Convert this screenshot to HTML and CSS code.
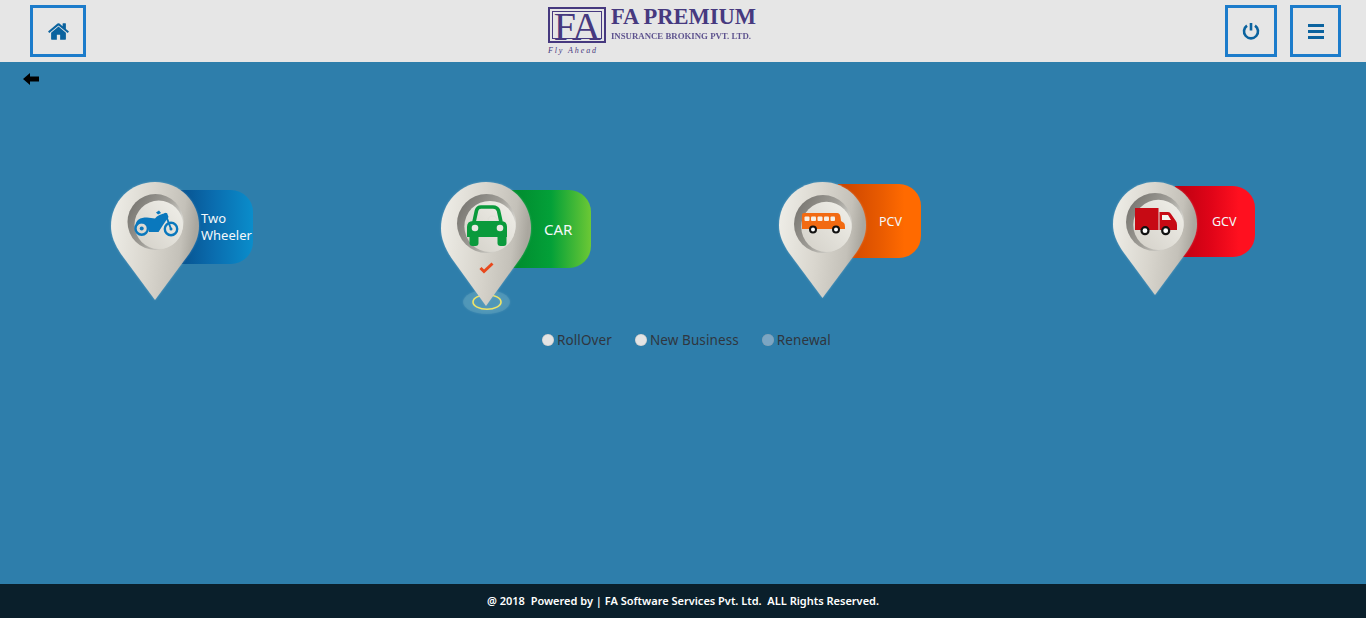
FILE: index.html
```html
<!DOCTYPE html>
<html lang="en">
<head>
<meta charset="utf-8">
<title>FA Premium</title>
<link rel="stylesheet" href="styles.css">
</head>
<body>
<svg class="defs" aria-hidden="true">
  <defs>
    <linearGradient id="pinFill" x1="0" y1="0" x2="1" y2="0.15">
      <stop offset="0" stop-color="#f0efe9"/>
      <stop offset="0.5" stop-color="#d9d6ce"/>
      <stop offset="0.85" stop-color="#c4c1b9"/>
      <stop offset="1" stop-color="#aaa79f"/>
    </linearGradient>
    <linearGradient id="wellDark" x1="0" y1="0" x2="1" y2="0.6">
      <stop offset="0" stop-color="#6f6d68"/>
      <stop offset="0.6" stop-color="#a09e98"/>
      <stop offset="1" stop-color="#e4e3dd"/>
    </linearGradient>
    <linearGradient id="wellLight" x1="0" y1="1" x2="1" y2="0">
      <stop offset="0" stop-color="#d3d0c8"/>
      <stop offset="1" stop-color="#f1f0ea"/>
    </linearGradient>
    <symbol id="pin" viewBox="0 0 88 118" preserveAspectRatio="none">
      <path fill="url(#pinFill)" d="M44 0C68.5 0 88 19.5 88 44C88 54 84 63 78 72L44 118L10 72C4 63 0 54 0 44C0 19.5 19.500 0 44 0Z"/>
    </symbol>
    <symbol id="well" viewBox="0 0 60 60">
      <circle cx="30" cy="30" r="30" fill="url(#wellDark)"/>
      <circle cx="33.500" cy="33" r="26" fill="url(#wellLight)"/>
    </symbol>
  </defs>
</svg>

<header class="topbar">
  <a class="tool tool-home" href="#" aria-label="Home">
    <svg class="icon-home" viewBox="0 0 1792 1792"><path d="M1472 992v480q0 26-19 45t-45 19h-384v-384h-256v384h-384q-26 0-45-19t-19-45v-480q0-1 .5-3t.5-3l575-474 575 474q1 2 1 6zm223-69l-62 74q-8 9-21 11h-3q-13 0-21-7l-692-577-692 577q-12 8-24 7-13-2-21-11l-62-74q-8-10-7-23.5t11-21.5l719-599q32-26 76-26t76 26l244 204v-195q0-14 9-23t23-9h192q14 0 23 9t9 23v408l219 182q10 8 11 21.5t-7 23.5z"/></svg>
  </a>
  <div class="logo">
    <div class="logo-mark">
      <div class="logo-box">FA</div>
      <div class="logo-tag">Fly Ahead</div>
    </div>
    <div class="logo-words">
      <div class="logo-name">FA PREMIUM</div>
      <div class="logo-sub">INSURANCE BROKING PVT. LTD.</div>
    </div>
  </div>
  <div class="tools-right">
    <a class="tool tool-power" href="#" aria-label="Log out">
      <svg class="icon-power" viewBox="0 0 18 18"><path d="M5 3.600A7 7 0 1 0 13 3.600"/><path d="M9 1V8.500"/></svg>
    </a>
    <a class="tool tool-menu" href="#" aria-label="Menu">
      <span class="bars"><i></i><i></i><i></i></span>
    </a>
  </div>
</header>

<main class="content">
  <a class="back" href="#" aria-label="Back">
    <svg class="icon-back" viewBox="0 0 16 12"><path d="M0 6L7 0V3.500H16V8.500H7V12Z"/></svg>
  </a>

  <section class="vehicles">
    <div class="vehicle v-bike">
      <div class="badge badge-bike">Two<br>Wheeler</div>
      <svg class="pin-art" viewBox="0 0 88 118">
        <use href="#pin" width="88" height="118"/>
        <use href="#well" x="15" y="12" width="59" height="56"/>
        <g fill="#0a78bd">
          <path d="M24.500 44C24.500 38 29 35.500 36 35.500L44 36.500C46 33.500 50 32 56 31L57.500 35L52 43L47.500 50H38C38 44 34 40.500 29 41.500C27 42 25 43 24.500 44Z"/>
          <path d="M45 30.500L48 28.500L50 31L47 32.500Z"/>
          <path d="M54 31L60 47" stroke="#0a78bd" stroke-width="2" fill="none"/>
          <circle cx="30.700" cy="46.500" r="6.200" fill="none" stroke="#0a78bd" stroke-width="2.400"/>
          <circle cx="60" cy="47" r="6.200" fill="none" stroke="#0a78bd" stroke-width="2.400"/>
          <circle cx="30.700" cy="46.500" r="2"/>
          <circle cx="60" cy="47" r="1.500"/>
        </g>
      </svg>
    </div>

    <div class="vehicle v-car">
      <div class="badge badge-car">CAR</div>
      <svg class="pin-art pin-art-car" viewBox="0 0 92 134">
        <ellipse cx="45.500" cy="120" rx="23.500" ry="12" fill="#5fa3bd" opacity=".45"/>
        <ellipse cx="46" cy="120" rx="14" ry="7.200" fill="none" stroke="#f0e566" stroke-width="1.600"/>
        <use href="#pin" width="90" height="124"/>
        <use href="#well" x="14.500" y="12" width="62" height="59"/>
        <g fill="#0a9a3c">
          <path d="M33 40L35.500 28.500Q36.500 25 40 25H52Q56 25 57.500 28.500L60 40" fill="none" stroke="#0a9a3c" stroke-width="3.600"/>
          <path d="M26 45Q26 39 32 39H60Q66 39 66 45V55H26Z"/>
          <rect x="28.500" y="50" width="9" height="14" rx="3"/>
          <rect x="56.500" y="50" width="9" height="14" rx="3"/>
        </g>
        <circle cx="34" cy="46" r="3.300" fill="#e9e8e2"/>
        <circle cx="59" cy="46" r="3.300" fill="#e9e8e2"/>
        <path d="M47 39Q47 34 51.500 34Q56 34 56 39" fill="none" stroke="#e0dfd8" stroke-width="1"/>
        <path d="M39.500 86L43 89.500L51.500 81.500" fill="none" stroke="#e8481c" stroke-width="3"/>
      </svg>
    </div>

    <div class="vehicle v-bus">
      <div class="badge badge-bus">PCV</div>
      <svg class="pin-art" viewBox="0 0 87 116">
        <use href="#pin" width="87" height="116"/>
        <use href="#well" x="14" y="13" width="60" height="58"/>
        <path fill="#f26a12" d="M25 31H58Q61 31 61.500 35L62 39L65 41Q66 42 66 45V47H23V33Q23 31 25 31Z"/>
        <g fill="#f6efe6">
          <rect x="25.500" y="34.500" width="5" height="4.500" rx="1"/>
          <rect x="32" y="34.500" width="5" height="4.500" rx="1"/>
          <rect x="38.500" y="34.500" width="5" height="4.500" rx="1"/>
          <rect x="45" y="34.500" width="5" height="4.500" rx="1"/>
          <rect x="51.500" y="34.500" width="4.500" height="4.500" rx="1"/>
        </g>
        <circle cx="34" cy="47.500" r="3" fill="#fff" stroke="#111" stroke-width="2"/>
        <circle cx="57" cy="47.500" r="3" fill="#fff" stroke="#111" stroke-width="2"/>
      </svg>
    </div>

    <div class="vehicle v-truck">
      <div class="badge badge-truck">GCV</div>
      <svg class="pin-art" viewBox="0 0 84 113">
        <use href="#pin" width="84" height="113"/>
        <use href="#well" x="13" y="11" width="58" height="58"/>
        <rect x="22" y="26" width="23.500" height="22" fill="#c70a14"/>
        <path fill="#c70a14" d="M46.500 30H55Q57 30 58 32L62.500 38.500Q64 40 64 43V48H46.500Z"/>
        <path fill="#f4f3ee" d="M49 33H55L58 38H49Z"/>
        <circle cx="32" cy="48.700" r="3.500" fill="#fff" stroke="#111" stroke-width="2.200"/>
        <circle cx="52.700" cy="48.700" r="3.500" fill="#fff" stroke="#111" stroke-width="2.200"/>
      </svg>
    </div>
  </section>

  <form class="types">
    <label class="type"><input type="radio" name="type">RollOver</label>
    <label class="type"><input type="radio" name="type">New Business</label>
    <label class="type"><input class="radio-off" type="radio" name="type">Renewal</label>
  </form>
</main>

<footer class="footer">@ 2018&nbsp; Powered by | FA Software Services Pvt. Ltd.&nbsp; ALL Rights Reserved.</footer>
</body>
</html>
```

FILE: styles.css
```css
* { box-sizing: border-box; }
html, body { height: 100%; }
body {
  margin: 0;
  height: 618px;
  display: flex;
  flex-direction: column;
  overflow: hidden;
  font-family: "Noto Sans", "Open Sans", sans-serif;
}
.defs { position: absolute; width: 0; height: 0; }

.topbar {
  height: 62px;
  flex: none;
  background: #e6e6e6;
  padding: 5px 25px 5px 30px;
  display: flex;
  align-items: flex-start;
  justify-content: space-between;
}
.tool {
  display: flex;
  align-items: center;
  justify-content: center;
  height: 52px;
  border: 3px solid #1c7ccb;
}
.tool-home { width: 56px; }
.tool-power { width: 52px; }
.tool-menu { width: 51px; }
.tools-right { display: flex; gap: 13px; }
.icon-home { width: 23px; height: 23px; fill: #0b639f; }
.icon-power { width: 18px; height: 18px; fill: none; stroke: #0b639f; stroke-width: 2.600; }
.bars { display: flex; flex-direction: column; gap: 3px; width: 16px; }
.bars i { display: block; height: 3px; background: #0b639f; }

.logo {
  display: flex;
  gap: 5px;
  color: #46397f;
  font-family: "Liberation Serif", serif;
  margin-top: 2px;
  margin-right: 7px;
}
.logo-box {
  width: 58px;
  height: 36px;
  border: 2px solid #46397f;
  outline: 1px solid #46397f;
  outline-offset: -5px;
  font-size: 40px;
  line-height: 36px;
  text-align: center;
  letter-spacing: -1px;
}
.logo-tag {
  font-size: 8px;
  font-style: italic;
  letter-spacing: 1.900px;
  line-height: 10px;
  margin-top: 3px;
}
.logo-name {
  font-size: 22.500px;
  font-weight: bold;
  line-height: 20px;
  white-space: nowrap;
}
.logo-sub {
  font-size: 8.800px;
  font-weight: bold;
  line-height: 12px;
  margin-top: 3px;
  white-space: nowrap;
  opacity: .85;
}

.content {
  flex: 1;
  background: #2e7eab;
  padding-top: 11px;
}
.back { display: block; width: 16px; height: 12px; margin-left: 23px; }
.icon-back { display: block; width: 16px; height: 12px; fill: #000; }

.vehicles {
  display: flex;
  align-items: flex-start;
  gap: 188px;
  height: 150px;
  margin-top: 97px;
  padding-left: 111px;
}
.vehicle { position: relative; flex: none; }
.pin-art { position: absolute; left: 0; top: 0; display: block; overflow: visible; filter: drop-shadow(0 0 1px rgba(255,255,255,.25)); }

.v-bike { width: 142px; height: 118px; }
.v-bike .pin-art { width: 88px; height: 118px; }
.v-car { width: 150px; height: 124px; }
.pin-art-car, .v-car .pin-art { width: 92px; height: 134px; }
.v-bus { width: 142px; height: 116px; }
.v-bus .pin-art { width: 87px; height: 116px; }
.v-truck { width: 142px; height: 113px; margin-left: 4px; }
.v-truck .pin-art { width: 84px; height: 113px; }

.badge {
  display: flex;
  align-items: center;
  color: #f4f8fa;
  border-radius: 0 22px 22px 0;
  font-size: 13px;
}
.badge-bike {
  display: block;
  width: 73px;
  height: 74px;
  margin: 8px 0 0 69px;
  padding: 20px 0 0 21px;
  line-height: 17px;
  background: linear-gradient(90deg, #07528f 0%, #0a6cae 45%, #0a8dcb 100%);
}
.badge-car {
  width: 80px;
  height: 78px;
  margin: 8px 0 0 70px;
  padding-left: 33px;
  font-size: 15px;
  background: linear-gradient(90deg, #008a2e 0%, #03a038 50%, #6cc835 100%);
}
.badge-bus {
  width: 83px;
  height: 74px;
  margin: 2px 0 0 59px;
  padding-left: 41px;
  font-size: 12.500px;
  background: linear-gradient(90deg, #c84300 0%, #e85a00 50%, #ff6a00 80%);
}
.badge-truck {
  width: 80px;
  height: 71px;
  margin: 4px 0 0 62px;
  padding-left: 37px;
  font-size: 12.500px;
  background: linear-gradient(90deg, #bb0010 0%, #e00418 45%, #ff101f 80%);
}

.types {
  display: flex;
  align-items: center;
  gap: 23px;
  height: 16px;
  margin: 0;
  padding-left: 542px;
}
.type {
  display: flex;
  align-items: center;
  gap: 3px;
  font-size: 13.500px;
  color: #2f3640;
  letter-spacing: .1px;
}
.type input {
  appearance: none;
  width: 12px;
  height: 12px;
  margin: 0;
  border-radius: 50%;
  background: #e4e4e4;
  box-shadow: inset 0 0 1px #999;
}
.type input.radio-off { background: #7ba6c4; }

.footer {
  flex: none;
  height: 34px;
  background: #0a1f2b;
  color: #fff;
  font-size: 11px;
  font-weight: 600;
  line-height: 34px;
  text-align: center;
}
```
